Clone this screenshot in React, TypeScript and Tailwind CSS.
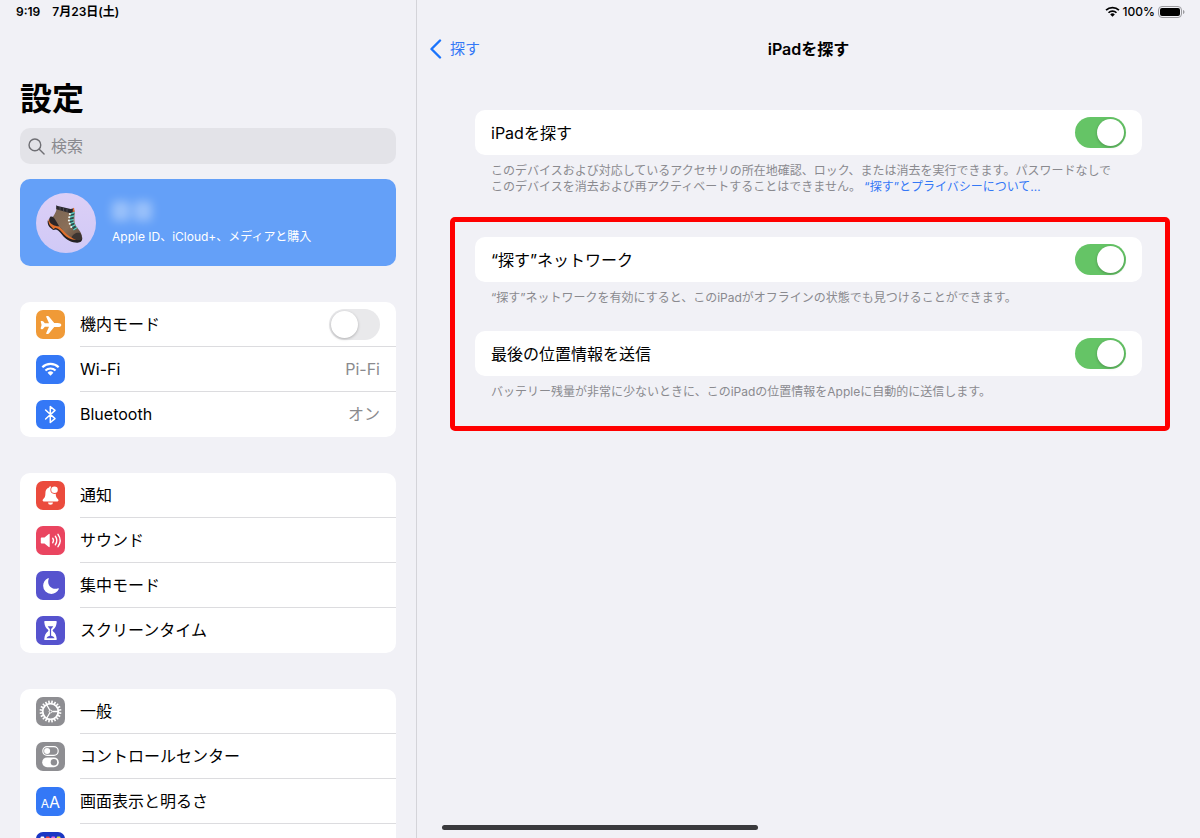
import React, { useId, useState } from "react";
import { IoAirplane, IoMoon } from "react-icons/io5";

const TEETH = Array.from({ length: 20 }, (_, i) => i * 18);

function WifiGlyph({ className }: { className: string }) {
  return (
    <svg viewBox="0 0 20 15" className={className} fill="none" stroke="currentColor" strokeWidth="2.3" aria-hidden="true">
      <path d="M1.4 5.6a12.2 12.2 0 0 1 17.2 0" />
      <path d="M4.7 9a7.6 7.6 0 0 1 10.6 0" />
      <path d="M10 14.4 6.9 11.2a4.5 4.5 0 0 1 6.2 0z" fill="currentColor" stroke="none" />
    </svg>
  );
}

function BluetoothGlyph() {
  return (
    <svg viewBox="0 0 29 29" className="size-full" fill="none" stroke="white" strokeWidth="1.5" strokeLinejoin="round" strokeLinecap="round" aria-hidden="true">
      <path d="M9.6 10 19 18.6l-4.7 3.9V6.5l4.7 3.9L9.6 19" />
    </svg>
  );
}

function BellGlyph() {
  return (
    <svg viewBox="0 0 29 29" className="size-full" aria-hidden="true">
      <path d="M14.5 5.2c-.8 0-1.4.6-1.4 1.400-2.400.8-3.700 2.700-3.700 5.300 0 4-1 5-2.300 6.300-.9.9-.5 2.300.7 2.300h13.500c1.200 0 1.600-1.400.7-2.300-1.300-1.300-2.200-2.300-2.300-5.800z" fill="white" />
      <path d="M12 21.500h5a2.500 2.200 0 0 1-5 0z" fill="white" />
      <circle cx="18.500" cy="8.800" r="4.100" fill="#eb4b3d" />
      <circle cx="18.500" cy="8.800" r="3.300" fill="white" />
    </svg>
  );
}

function SpeakerGlyph() {
  return (
    <svg viewBox="0 0 29 29" className="size-full" fill="none" stroke="white" strokeWidth="1.400" strokeLinecap="round" aria-hidden="true">
      <path d="M5.500 11.500h3l4.300-3.500c.4-.3.900-.1.900.4v12.200c0 .5-.5.700-.9.400l-4.300-3.500h-3c-.4 0-.7-.3-.7-.7v-4.600c0-.4.300-.7.700-.7z" fill="white" stroke="none" />
      <path d="M16.700 12.200a4 4 0 0 1 0 4.600" />
      <path d="M19.300 10.200a7.400 7.400 0 0 1 0 8.600" />
      <path d="M22 8.300a10.800 10.800 0 0 1 0 12.400" />
    </svg>
  );
}

function HourglassGlyph() {
  return (
    <svg viewBox="0 0 29 29" className="size-full" aria-hidden="true">
      <path d="M9.300 5h10.400c.9 0 1.200.6 1 1.300-.4 3.700-1.500 5.700-3.500 7.200-.8.700-.8 1.300 0 2 2 1.500 3.100 3.500 3.500 7.200.2.700-.1 1.300-1 1.300H9.300c-.9 0-1.200-.6-1-1.300.4-3.700 1.500-5.700 3.500-7.200.8-.7.800-1.300 0-2-2-1.500-3.100-3.500-3.500-7.200-.2-.7.100-1.300 1-1.300z" fill="white" />
      <path d="M11.700 10.200h5.600c-.6 1.200-1.500 2-2.200 2.700v7.200h-1.200v-7.200c-.7-.7-1.600-1.500-2.200-2.700z" fill="#5653ce" />
      <path d="M10.500 22.300c.5-1.500 2-2.300 4-2.700 2 .4 3.500 1.200 4 2.700z" fill="#5653ce" />
    </svg>
  );
}

function GearGlyph() {
  return (
    <svg viewBox="0 0 29 29" className="size-full" fill="none" stroke="white" aria-hidden="true">
      <circle cx="14.500" cy="14.500" r="7.800" strokeWidth="1.800" />
      {TEETH.map((angle) => (
        <path key={angle} d="M14.500 3.600v2.800" strokeWidth="1.600" transform={`rotate(${angle + 9} 14.500 14.500)`} />
      ))}
      <circle cx="14.500" cy="14.500" r="1.400" strokeWidth="1" />
      <path d="M16.200 14.500h6M13.700 13l-3-5.200M13.700 16l-3 5.200" strokeWidth="1.300" />
    </svg>
  );
}

function ControlGlyph() {
  return (
    <svg viewBox="0 0 29 29" className="size-full" aria-hidden="true">
      <rect x="6.800" y="4.700" width="15.400" height="8.600" rx="4.300" fill="none" stroke="white" strokeWidth="1.200" />
      <circle cx="11.100" cy="9" r="3" fill="white" />
      <rect x="6.200" y="15.400" width="16.600" height="9.800" rx="4.900" fill="white" />
      <circle cx="17.900" cy="20.300" r="3.200" fill="#8e8e92" />
    </svg>
  );
}

function HomeGridGlyph() {
  const colors = ["#ffffff", "#f0483e", "#e06be8", "#e9e13c"];
  return (
    <svg viewBox="0 0 29 29" className="size-full" aria-hidden="true">
      {[0, 1, 2, 3].map((row) =>
        colors.map((c, col) => (
          <rect key={`${row}-${col}`} x={4.500 + col * 5.400} y={4.500 + row * 5.400} width="3.800" height="3.800" rx="1" fill={c} />
        )),
      )}
    </svg>
  );
}

function Boot() {
  return (
    <svg viewBox="0 0 60 60" className="size-15 shrink-0" aria-hidden="true">
      <defs>
        <linearGradient id="boot-leather" x1="0" y1="0" x2="1" y2="1">
          <stop offset="0" stopColor="#7a6554" />
          <stop offset="0.600" stopColor="#8a6f58" />
          <stop offset="1" stopColor="#5a483c" />
        </linearGradient>
        <linearGradient id="avatar-fill" x1="0" y1="0" x2="0" y2="1">
          <stop offset="0" stopColor="#dccff6" />
          <stop offset="1" stopColor="#d0c9f6" />
        </linearGradient>
      </defs>
      <circle cx="30" cy="30" r="30" fill="url(#avatar-fill)" />
      <path d="M11.700 27.500c-.3 2.500.3 5 2.300 7l3.200 2.500 2.800-.6c3 .8 5 4 7.500 7.200 3.500 3.800 9 6.400 14 6.200 3-.2 5-1.700 4.700-5z" fill="#232124" />
      <path d="M12.200 26.500c.2 3.200 1.200 6 3.600 7.800l1.700 1.900 1.800-1.400c4 .8 6 3.700 8.400 6.500 3 3.200 7 5.400 12.300 5.700l-2-4-12-7-9-9z" fill="#e0702e" />
      <path d="M20.800 14.500 38.300 17c.7 5-.3 9 .4 13 .9 4.300 6.300 7.500 7 12.500-2 3.800-7.500 3.300-12 1-4.500-2.600-6.500-7-10-9.500l-8.700-4c-.2-6 5.300-8.500 5.800-15.500z" fill="url(#boot-leather)" />
      <path d="M14.500 23.500c2.200-.5 4.200 1.500 5.500 4.500l3.200 5.200c-4 .3-8.700-1.700-9.900-5.200-.4-1.700.2-3.500 1.200-4.500z" fill="#2a2629" />
      <path d="M35.500 44.500c1-3.200 5-5.500 8.500-4.600 1.700 2 2.600 4.300 1.900 6.400-3 1.700-7.400.7-10.400-1.800z" fill="#3c3431" />
      <path d="m20.200 12.300 1.500.8 13 3 3-.8.500 3.700-3.700 1.200-12.200-3.400-2.100-.5z" fill="#2a282d" />
      <path d="m37 14.800 1.200.5.200 3.500-1.700.3z" fill="#dd6b2c" />
      <path d="M24 14v3.500M27.500 14.900v3.500M31 15.800v3.500" stroke="#59545b" strokeWidth="0.800" />
      <path d="m37 19.500-1.700 8 1.700 5 2.500 4" stroke="#2a4a4d" strokeWidth="3.200" fill="none" />
      <path d="m34.500 20.800 3.600-1.200M34 24l3.600-1M33.600 27.300l3.700-.7M34.300 30.500l3.500-1.400M35.700 33.600l3.300-1.700M37.800 36.600l3-1.800" stroke="#5fcdbf" strokeWidth="1.300" strokeLinecap="round" />
      <g fill="#f0f7f5">
        <circle cx="33.800" cy="21" r="1" />
        <circle cx="33.200" cy="24.200" r="1" />
        <circle cx="32.900" cy="27.500" r="1" />
        <circle cx="33.700" cy="30.800" r="1" />
        <circle cx="35.200" cy="34" r="1" />
      </g>
    </svg>
  );
}

function Toggle({ id, on }: { id: string; on: boolean }) {
  const [checked, setChecked] = useState(on);
  return (
    <input
      id={id}
      type="checkbox"
      role="switch"
      checked={checked}
      onChange={() => setChecked(!checked)}
      className="flex h-[31px] w-[51px] shrink-0 cursor-pointer appearance-none items-center rounded-full bg-[#e9e9eb] p-[2px] before:size-[27px] before:rounded-full before:bg-white before:shadow-[0_1px_3px_rgba(0,0,0,0.25)] before:content-[''] checked:justify-end checked:bg-[#65c466]"
    />
  );
}

type Item = { name: string; iconOnly?: boolean; tile: string; icon: React.ReactNode; value?: string; toggle?: boolean };

const GROUPS: Item[][] = [
  [
    { name: "機内モード", tile: "bg-[#f09a37]", icon: <IoAirplane className="size-[22px]" />, toggle: true },
    { name: "Wi-Fi", tile: "bg-[#3478f6]", icon: <WifiGlyph className="w-[19px]" />, value: "Pi-Fi" },
    { name: "Bluetooth", tile: "bg-[#3478f6]", icon: <BluetoothGlyph />, value: "オン" },
  ],
  [
    { name: "通知", tile: "bg-[#eb4b3d]", icon: <BellGlyph /> },
    { name: "サウンド", tile: "bg-[#ea4560]", icon: <SpeakerGlyph /> },
    { name: "集中モード", tile: "bg-[#5653ce]", icon: <IoMoon className="size-[18px]" /> },
    { name: "スクリーンタイム", tile: "bg-[#5653ce]", icon: <HourglassGlyph /> },
  ],
  [
    { name: "一般", tile: "bg-[#8e8e92]", icon: <GearGlyph /> },
    { name: "コントロールセンター", tile: "bg-[#8e8e92]", icon: <ControlGlyph /> },
    {
      name: "画面表示と明るさ",
      tile: "bg-[#3478f6]",
      icon: (
        <span className="flex items-baseline pt-px leading-5">
          <span className="text-xs">A</span>
          <span className="text-base leading-5">A</span>
        </span>
      ),
    },
    { name: "ホーム画面", iconOnly: true, tile: "bg-[#1a36c4]", icon: <HomeGridGlyph /> },
  ],
];

function SidebarRow({ item, last }: { item: Item; last: boolean }) {
  const id = useId();
  const tile = (
    <span className={`flex size-[29px] shrink-0 items-center justify-center rounded-[7px] text-white ${item.tile}`}>{item.icon}</span>
  );
  const line = last ? "border-transparent" : "border-[#dcdcdf]";
  if (item.toggle) {
    return (
      <li className="flex h-[45px] items-center gap-[15px] pl-4">
        {tile}
        <div className={`flex h-full min-w-0 flex-1 items-center justify-between border-b pr-4 ${line}`}>
          <label htmlFor={id}>{item.name}</label>
          <Toggle id={id} on={false} />
        </div>
      </li>
    );
  }
  return (
    <li>
      <button
        type="button"
        aria-label={item.iconOnly ? item.name : undefined}
        className="flex h-[45px] w-full items-center gap-[15px] pl-4 text-left"
      >
        {tile}
        <span className={`flex h-full min-w-0 flex-1 items-center justify-between border-b pr-4 ${line}`}>
          {!item.iconOnly && <span>{item.name}</span>}
          {item.value && <span className="text-[#8a8a8e]">{item.value}</span>}
        </span>
      </button>
    </li>
  );
}

function Setting({ label, children }: { label: string; children: React.ReactNode }) {
  const id = useId();
  return (
    <section>
      <div className="flex h-[45px] items-center justify-between rounded-[10px] bg-white px-4">
        <label htmlFor={id}>{label}</label>
        <Toggle id={id} on />
      </div>
      <p className="pt-2 pr-6 pl-4 text-xs leading-4 text-[#8a8a8f]">{children}</p>
    </section>
  );
}

export default function App() {
  return (
    <div className="relative flex h-screen overflow-hidden bg-[#f1f1f6] font-['Inter','Noto_Sans_CJK_JP',sans-serif] text-base text-black" lang="ja">
      <aside className="w-[417px] shrink-0 overflow-y-auto border-r border-[#d4d4d9] px-5 [scrollbar-width:none]">
        <div className="-mx-1 flex h-6 items-center gap-3 text-xs font-semibold">
          <span>9:19</span>
          <span>7月23日(土)</span>
        </div>
        <h1 className="mt-[53px] mb-[7px] text-[32px] leading-[44px] font-bold">設定</h1>
        <div className="flex h-9 items-center gap-[6px] rounded-[10px] bg-[#e3e3e8] px-2">
          <svg viewBox="0 0 18 18" className="size-[17px] shrink-0" fill="none" stroke="#6f6f74" strokeWidth="1.500" strokeLinecap="round" aria-hidden="true">
            <circle cx="7.300" cy="7.300" r="6.200" />
            <path d="m11.900 11.900 5.100 5.100" />
          </svg>
          <input type="search" aria-label="検索" placeholder="検索" className="min-w-0 flex-1 bg-transparent outline-none placeholder:text-[#8a8a8f]" />
        </div>
        <button type="button" className="mt-[15px] flex h-[87px] w-full items-center gap-4 rounded-[10px] bg-[#64a0f8] px-4 text-left text-white">
          <Boot />
          <span className="flex flex-col gap-2">
            <span className="flex h-5 gap-1 blur-[5px]" aria-hidden="true">
              <span className="w-[18px] rounded bg-white/35" />
              <span className="w-[18px] rounded bg-white/35" />
            </span>
            <span className="text-xs leading-4">Apple ID、iCloud+、メディアと購入</span>
          </span>
        </button>
        {GROUPS.map((group) => (
          <ul key={group[0].name} className="mt-9 overflow-hidden rounded-[10px] bg-white">
            {group.map((item, i) => (
              <SidebarRow key={item.name} item={item} last={i === group.length - 1} />
            ))}
          </ul>
        ))}
      </aside>

      <main className="min-w-0 flex-1">
        <div className="flex h-6 items-center justify-end gap-[3px] pr-[15px] text-xs font-medium">
          <WifiGlyph className="w-[15px]" />
          <span>100%</span>
          <svg viewBox="0 0 27 12" className="h-3 w-[27px]" aria-hidden="true">
            <rect x="0.500" y="0.500" width="23" height="11" rx="3.500" fill="none" stroke="#9b9b9f" />
            <rect x="2" y="2" width="20" height="8" rx="2" fill="#000" />
            <path d="M25 4v4c.9-.4 1.500-1.100 1.500-2S25.900 4.400 25 4z" fill="#9b9b9f" />
          </svg>
        </div>
        <header className="grid h-[50px] grid-cols-[1fr_auto_1fr] items-center px-3">
          <a href="#find" className="flex items-center gap-2 text-[15px] text-[#3478f6]">
            <svg viewBox="0 0 13 20" className="h-5 w-[13px]" fill="none" stroke="#1a74fc" strokeWidth="2.400" strokeLinecap="round" strokeLinejoin="round" aria-hidden="true">
              <path d="M11 1.500 2.500 10l8.500 8.500" />
            </svg>
            探す
          </a>
          <h2 className="font-semibold">iPadを探す</h2>
        </header>

        <div className="mt-9 px-[58px]">
          <Setting label="iPadを探す">
            このデバイスおよび対応しているアクセサリの所在地確認、ロック、または消去を実行できます。パスワードなしでこのデバイスを消去および再アクティベートすることはできません。{" "}
            <a href="#privacy" className="text-[#3478f6]">“探す”とプライバシーについて…</a>
          </Setting>
        </div>

        <div className="mt-[22px] mr-[30px] ml-[33px] flex flex-col gap-[25px] rounded-[5px] border-5 border-[#ff0000] pt-[15px] pr-[23px] pb-[26px] pl-5">
          <Setting label="“探す”ネットワーク">“探す”ネットワークを有効にすると、このiPadがオフラインの状態でも見つけることができます。</Setting>
          <Setting label="最後の位置情報を送信">バッテリー残量が非常に少ないときに、このiPadの位置情報をAppleに自動的に送信します。</Setting>
        </div>
      </main>

      <div className="absolute bottom-2 left-1/2 h-[5px] w-[316px] -translate-x-1/2 rounded-full bg-[#3a3a3d]" />
    </div>
  );
}
